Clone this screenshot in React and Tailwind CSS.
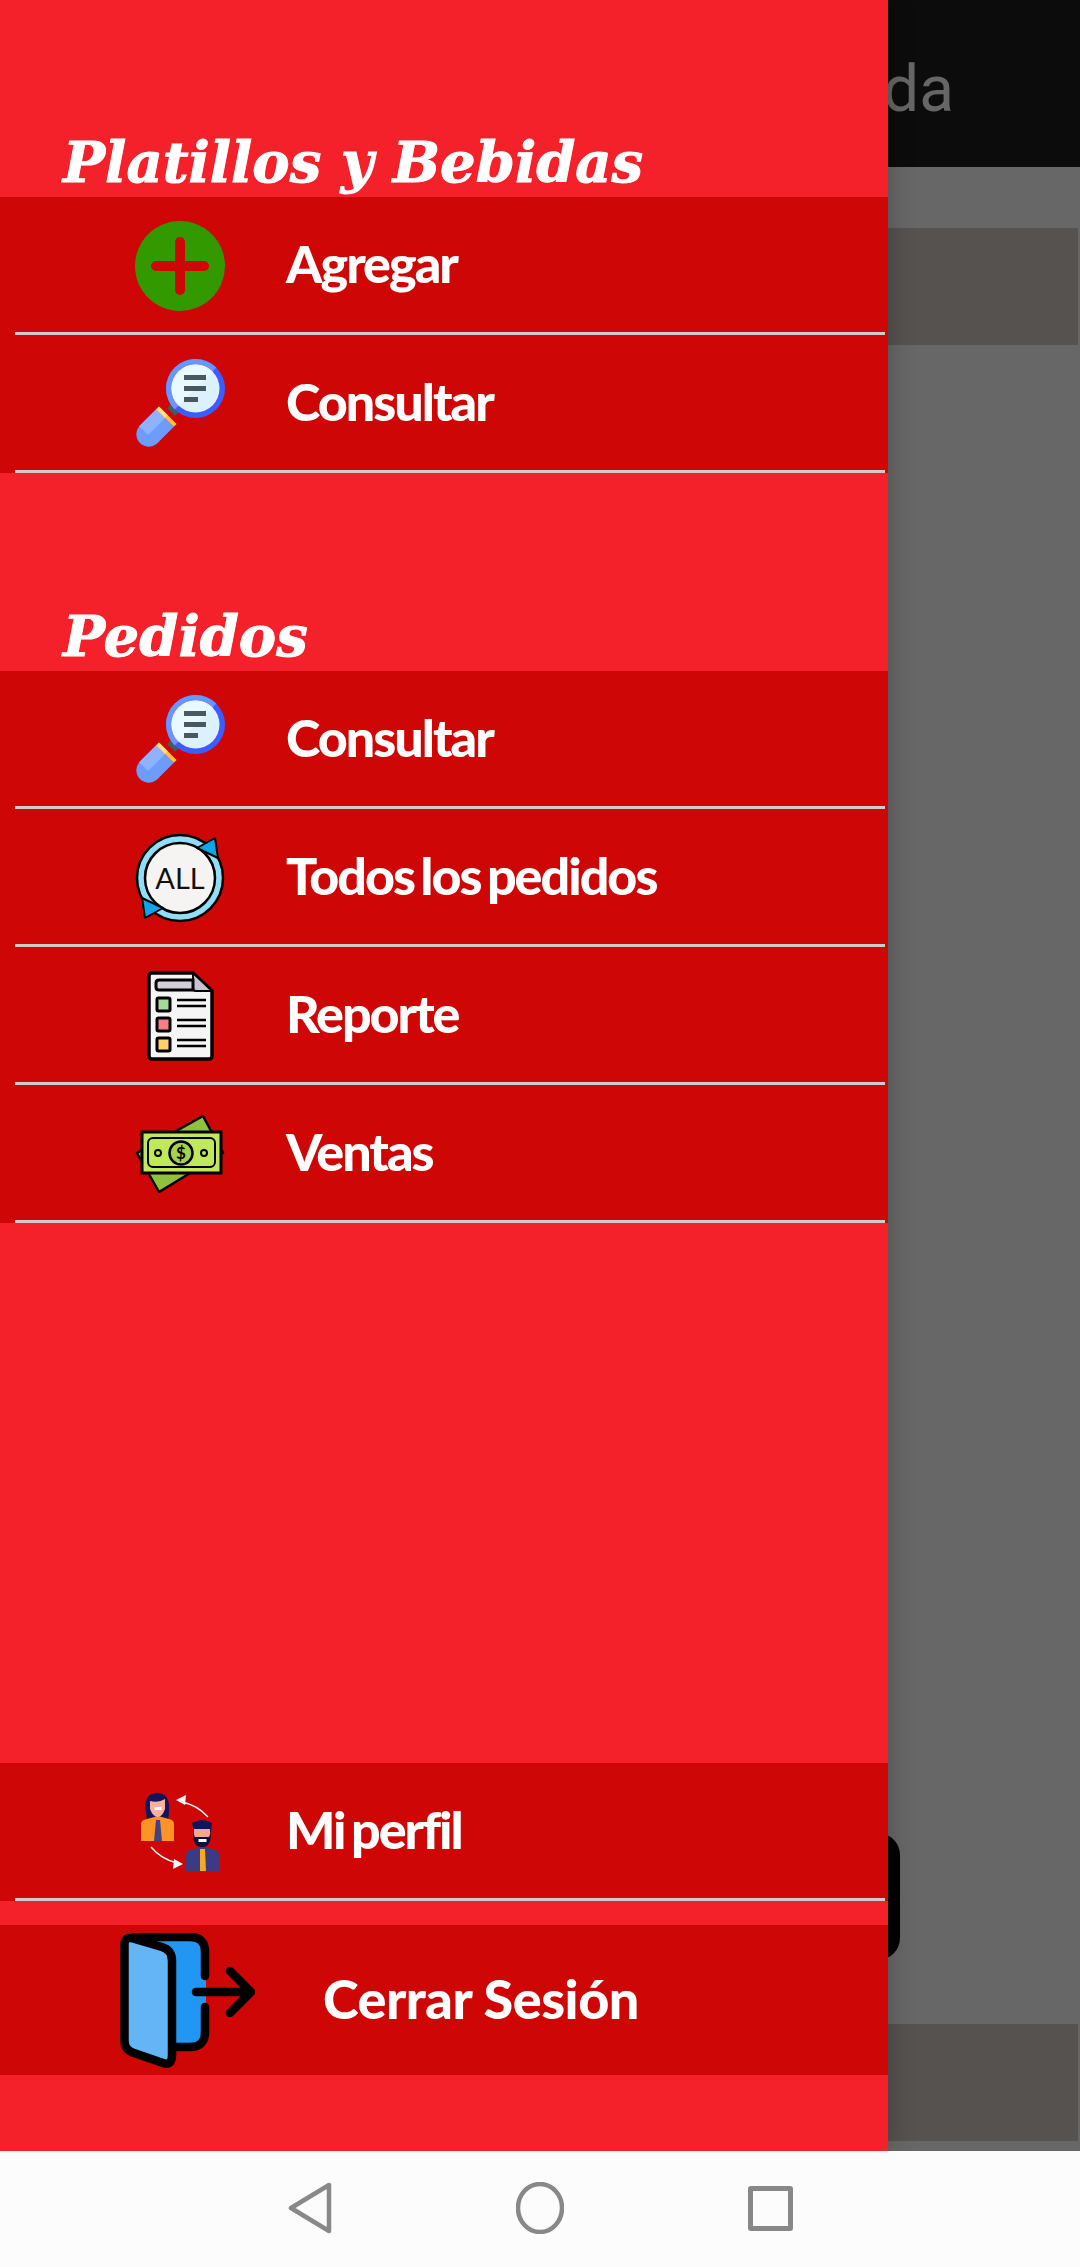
import React from 'react'

const PlusIcon = () => (
  <svg width="90" height="90" viewBox="0 0 90 90">
    <circle cx="45" cy="45" r="45" fill="#339900" />
    <path d="M45 21V69M21 45H69" stroke="#ce0606" strokeWidth="10" strokeLinecap="round" />
  </svg>
)

const SearchIcon = () => (
  <svg width="90" height="90" viewBox="0 0 90 90">
    <path d="M36 53L50 39" stroke="#455a64" strokeWidth="11" />
    <path d="M21.200 50.200L38.800 67.800L21.800 84.800A12.500 12.500 0 0 1 4.200 67.200Z" fill="#6c9cff" />
    <path d="M21.200 50.200L30 59L13 76L4.200 67.200Z" fill="#8fb2ff" />
    <path d="M21.200 50.200L38.800 67.800L41.600 65L24 47.400Z" fill="#ffc13d" />
    <path d="M21.200 50.200L30 59L32.800 56.200L24 47.400Z" fill="#ffdb8a" />
    <circle cx="60.500" cy="29.500" r="29.500" fill="#3d5cff" />
    <path d="M39.600 50.400A29.500 29.500 0 0 1 81.400 8.600Z" fill="#6a94ff" />
    <circle cx="60.500" cy="29.500" r="24" fill="#dcf0fd" />
    <path d="M43.500 46.500A24 24 0 0 1 77.500 12.500Z" fill="#e9f9ff" />
    <path d="M49 16H71V21H49ZM49 27H71V32H49ZM49 38H63V43H49Z" fill="#47595f" />
  </svg>
)

const AllIcon = () => (
  <svg width="90" height="90" viewBox="0 0 90 90">
    <circle cx="45" cy="45" r="43" fill="#90def8" stroke="#000" strokeWidth="2.500" />
    <circle cx="45" cy="45" r="35" fill="#f6f4f2" stroke="#000" strokeWidth="2.500" />
    <text x="45" y="56" textAnchor="middle" fontFamily="Lato, sans-serif" fontSize="29" fill="#111">ALL</text>
    <path d="M62 15L80 5L83 25Z" fill="#0ea5e9" stroke="#000" strokeWidth="2" strokeLinejoin="round" />
    <path d="M28 75L10 85L7 65Z" fill="#0ea5e9" stroke="#000" strokeWidth="2" strokeLinejoin="round" />
  </svg>
)

const ReportIcon = () => (
  <svg width="90" height="90" viewBox="0 0 90 90">
    <path d="M17 2H58L77 20V85Q77 88 74 88H17Q14 88 14 85V5Q14 2 17 2Z" fill="#f5f5f5" stroke="#000" strokeWidth="3.500" strokeLinejoin="round" />
    <path d="M58 2L77 20H61Q58 20 58 17Z" fill="#c9c5d0" stroke="#000" strokeWidth="2" strokeLinejoin="round" />
    <path d="M24 9H58V19H24Q21 19 21 16V12Q21 9 24 9Z" fill="#d3d0d8" stroke="#000" strokeWidth="3" />
    <rect x="22" y="27" width="13" height="13" rx="1.500" fill="#a8d99a" stroke="#000" strokeWidth="3" />
    <rect x="22" y="47" width="13" height="13" rx="1.500" fill="#f77f85" stroke="#000" strokeWidth="3" />
    <rect x="22" y="67" width="13" height="13" rx="1.500" fill="#ffd166" stroke="#000" strokeWidth="3" />
    <path d="M42 29H71M42 35H71M42 49H71M42 55H71M42 69H71M42 75H71" stroke="#000" strokeWidth="2.500" />
  </svg>
)

const MoneyIcon = () => (
  <svg width="90" height="78" viewBox="0 0 90 78">
    <path d="M2 38L68 1L88 38L24 77Z" fill="#8fc13e" stroke="#000" strokeWidth="2.500" strokeLinejoin="round" />
    <rect x="7" y="17" width="79" height="41" fill="#bfe85a" stroke="#000" strokeWidth="3" />
    <rect x="13" y="23" width="67" height="29" rx="5" fill="none" stroke="#000" strokeWidth="2" />
    <circle cx="46" cy="38" r="11.500" fill="#a5d24a" stroke="#000" strokeWidth="2.500" />
    <text x="46" y="44" textAnchor="middle" fontFamily="Lato, sans-serif" fontWeight="700" fontSize="17" fill="#000">$</text>
    <circle cx="23" cy="38" r="3" fill="none" stroke="#000" strokeWidth="2" />
    <circle cx="69" cy="38" r="3" fill="none" stroke="#000" strokeWidth="2" />
  </svg>
)

const ProfileIcon = () => (
  <svg width="90" height="90" viewBox="0 0 90 90">
    <path d="M11 26Q8 6 22 6Q36 6 34 26L33 33H12Z" fill="#14145c" />
    <path d="M6 54V37Q6 33 12 32L23 29L34 32Q39 33 39 37V54Z" fill="#ff9326" />
    <path d="M21 33H25L27 54H19Z" fill="#45427f" />
    <path d="M15 14Q24 16 30 12L30 22Q27 30 23 30Q18 30 15 22Z" fill="#fbb09b" />
    <rect x="19.500" y="20" width="7" height="3" fill="#fff" />
    <path d="M51 84V68Q51 63 58 62L67 60L77 62Q84 63 84 68V84Z" fill="#3b3b85" />
    <path d="M65 62H70L71 84H65Z" fill="#f9a825" />
    <path d="M57 36Q66 30 77 36L76 45H59Z" fill="#14145c" />
    <path d="M59 42H75V50Q71 59 67 59Q62 59 59 50Z" fill="#f3a98f" />
    <path d="M58 45L60 50H74L76 45Q76 61 67 60Q58 61 58 45Z" fill="#0f0f40" />
    <rect x="63.500" y="52" width="8" height="3" fill="#fff" />
    <path d="M73 30Q62 18 47 15" fill="none" stroke="#fff" strokeWidth="1.300" />
    <path d="M41 13L51 8L50 18Z" fill="#eef6ff" />
    <path d="M16 60Q26 72 42 76" fill="none" stroke="#fff" strokeWidth="1.300" />
    <path d="M48 77L38 82L39 72Z" fill="#eef6ff" />
  </svg>
)

const DoorIcon = () => (
  <svg width="135" height="135" viewBox="0 0 135 135">
    <path d="M30 4H72Q86 4 86 18V100Q86 114 72 114H40Z" fill="#2196f3" />
    <path d="M14 4H70Q85 4 85 19V43M85 74V99Q85 114 70 114H52" fill="none" stroke="#000" strokeWidth="8.500" strokeLinecap="round" />
    <path d="M4.500 12Q4.500 3 13 5.500L42 14Q52 17 52 28V122Q52 133 43 130L14 120Q4.500 117 4.500 108Z" fill="#64b5f6" stroke="#000" strokeWidth="8.500" strokeLinejoin="round" />
    <path d="M76 59H130M110 38L131 59L110 80" fill="none" stroke="#000" strokeWidth="8.500" strokeLinecap="round" strokeLinejoin="round" />
  </svg>
)

function MenuRow({ icon: Icon, label }) {
  return (
    <div className="flex h-[138px] flex-col bg-[#ce0606]">
      <div className="flex flex-1 items-center">
        <div className="ml-[135px] mt-[2px] flex w-[90px] justify-center">
          <Icon />
        </div>
        <span className="mb-[3px] ml-[61px] font-['Lato',sans-serif] text-[52px] font-black tracking-[-2px] text-white [word-spacing:-4px]">
          {label}
        </span>
      </div>
      <div className="ml-[15px] mr-[3px] h-[3px] bg-[#cccccc]" />
    </div>
  )
}

function SectionTitle({ children, className }) {
  return (
    <h2 className={`flex items-end pb-[3px] pl-[63px] font-['DejaVu_Serif',serif] text-[56px] font-bold italic leading-[64px] text-white [-webkit-text-stroke:1px_white] ${className}`}>
      {children}
    </h2>
  )
}

export default function App() {
  return (
    <div className="relative flex h-[2267px] w-[1080px] flex-col overflow-hidden bg-[#fcfcfc]">
      {/* App behind the drawer */}
      <header className="flex h-[167px] items-center justify-end bg-[#0c0c0c] pr-[126px] pt-[12px]">
        <span className="font-['Roboto',sans-serif] text-[64px] text-[#666666]">da</span>
      </header>
      <main className="flex flex-1 flex-col justify-between bg-[#676767] pb-[10px] pr-[2px] pt-[61px]">
        <div className="h-[117px] bg-[#565250]" />
        <div className="h-[117px] bg-[#565250]" />
      </main>
      <div className="absolute left-[700px] top-[1833px] h-[127px] w-[200px] rounded-[22px] bg-black" />

      {/* Drawer */}
      <aside className="absolute left-0 top-0 flex h-[2151px] w-[888px] flex-col bg-[#f4212b] shadow-[0_0_24px_rgba(0,0,0,0.25)]">
        <SectionTitle className="h-[197px]">Platillos y Bebidas</SectionTitle>
        <MenuRow icon={PlusIcon} label="Agregar" />
        <MenuRow icon={SearchIcon} label="Consultar" />
        <SectionTitle className="h-[198px]">Pedidos</SectionTitle>
        <MenuRow icon={SearchIcon} label="Consultar" />
        <MenuRow icon={AllIcon} label="Todos los pedidos" />
        <MenuRow icon={ReportIcon} label="Reporte" />
        <MenuRow icon={MoneyIcon} label="Ventas" />
        <div className="flex-1" />
        <MenuRow icon={ProfileIcon} label="Mi perfil" />
        <div className="mb-[76px] mt-[24px] flex h-[150px] items-center bg-[#ce0606]">
          <div className="ml-[120px]">
            <DoorIcon />
          </div>
          <span className="mb-[3px] ml-[68px] font-['Lato',sans-serif] text-[54px] font-black tracking-[-0.5px] text-white">
            Cerrar Sesión
          </span>
        </div>
      </aside>

      {/* Android nav bar */}
      <nav className="relative z-10 flex h-[116px] items-center justify-center gap-[184px] bg-[#fcfcfc] pb-[2px]">
        <svg width="44" height="52" viewBox="0 0 44 52">
          <path d="M3 26L41 3V49Z" fill="none" stroke="#888888" strokeWidth="4.500" strokeLinejoin="round" />
        </svg>
        <svg width="48" height="52" viewBox="0 0 48 52">
          <ellipse cx="24" cy="26" rx="22" ry="24" fill="none" stroke="#888888" strokeWidth="4.500" />
        </svg>
        <div className="h-[45px] w-[45px] rounded-[3px] border-[5px] border-[#888888]" />
      </nav>
    </div>
  )
}
